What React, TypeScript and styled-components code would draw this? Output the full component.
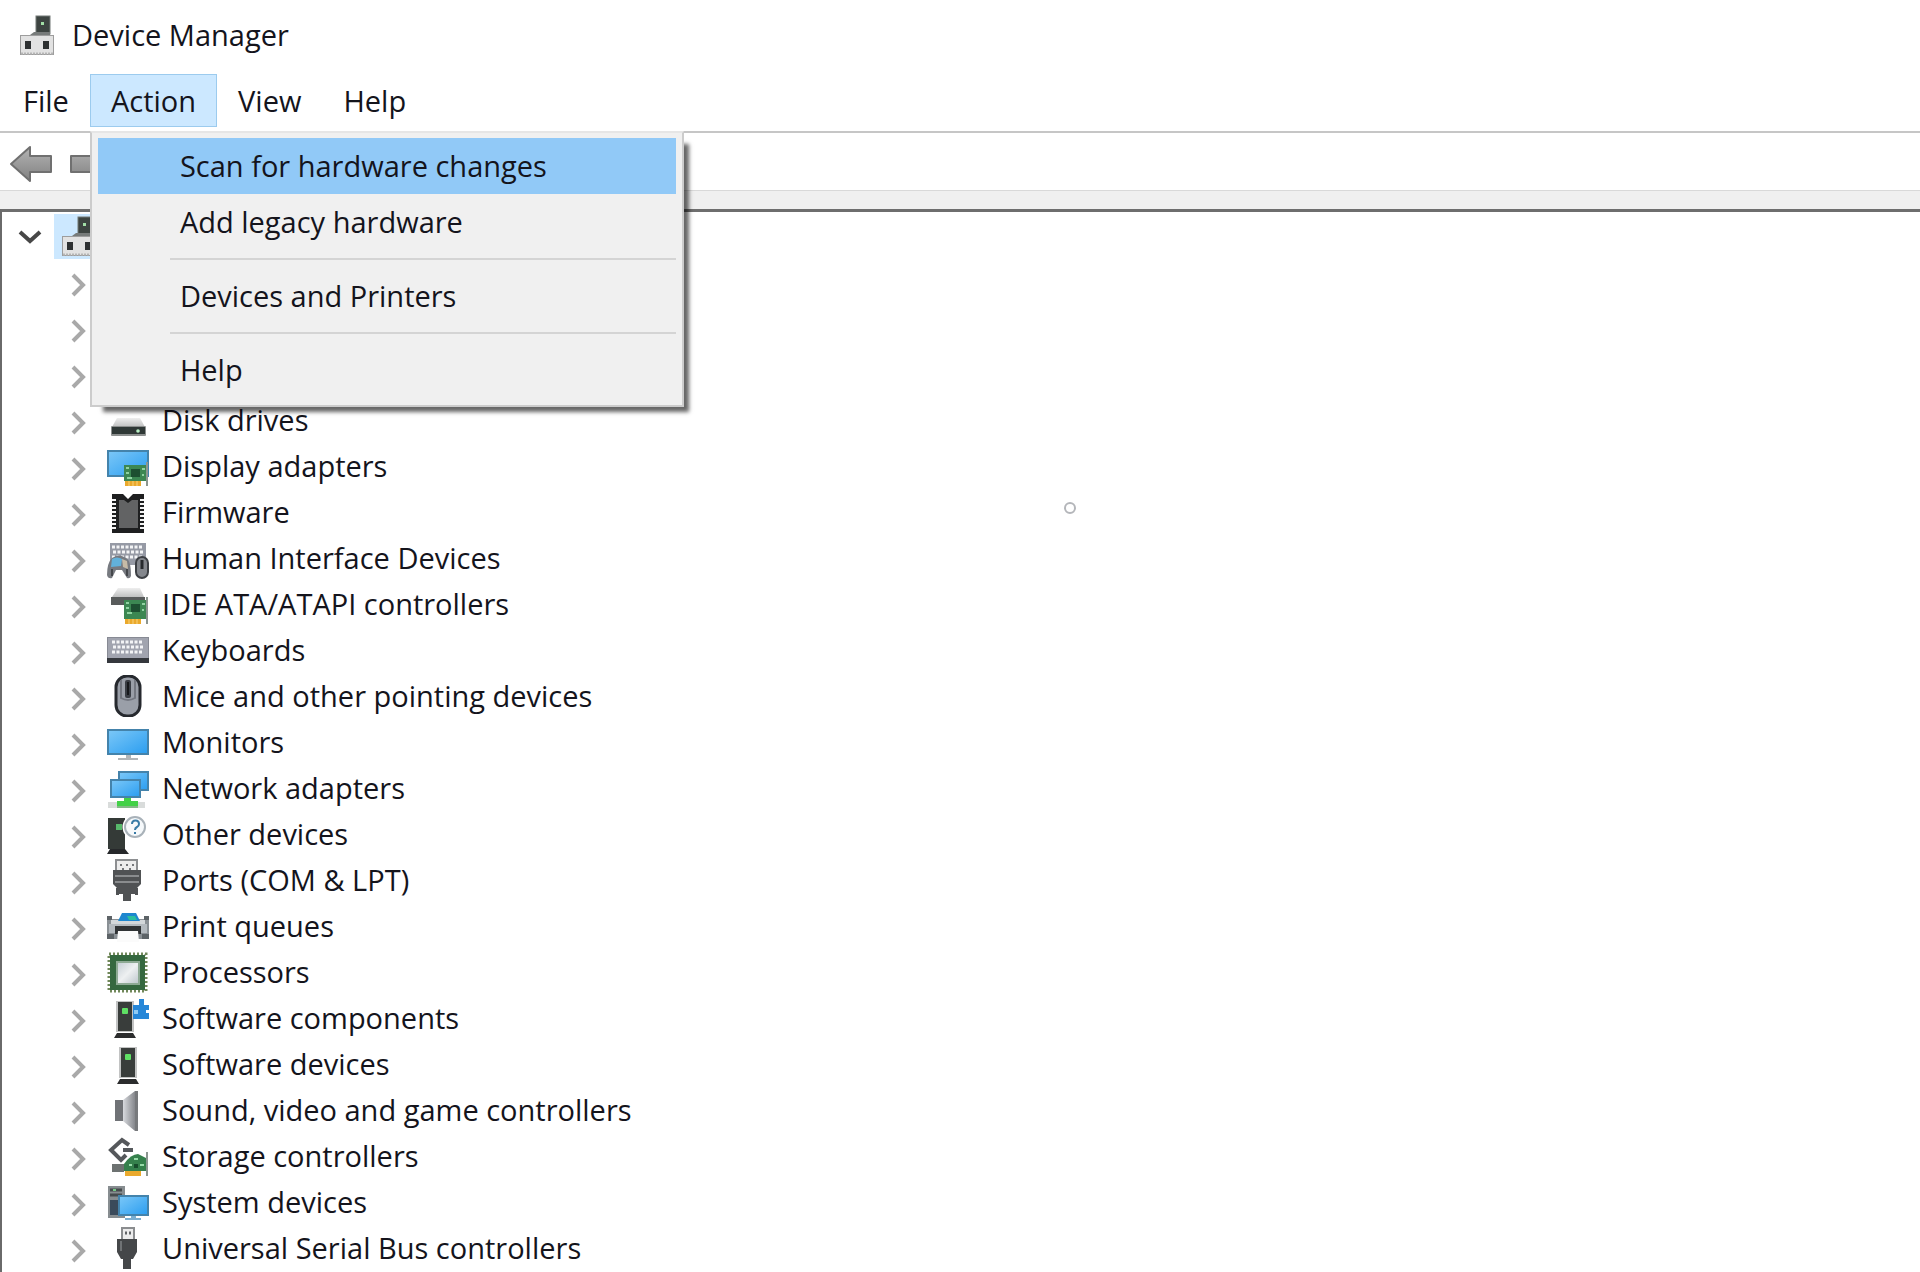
import React from "react";
import styled, { createGlobalStyle } from "styled-components";

const GlobalStyle = createGlobalStyle`
  *, *::before, *::after { box-sizing: border-box; }
  body {
    margin: 0;
    background: #ffffff;
    color: #14141c;
    font-family: "Open Sans", "Noto Sans", sans-serif;
    font-size: 29px;
    line-height: 36px;
  }
  button { font: inherit; color: inherit; }
`;

const Window = styled.div`
  position: relative;
  display: flex;
  flex-direction: column;
  min-height: 100vh;
  overflow: hidden;
`;

const TitleBar = styled.header`
  display: flex;
  align-items: center;
  gap: 14px;
  height: 70px;
  padding: 0 16px;
`;

const Title = styled.h1`
  margin: 0;
  font: inherit;
`;

const MenuBar = styled.nav`
  display: flex;
  padding: 4px 2px;
  border-bottom: 2px solid #c6c6c6;
`;

const MenuSlot = styled.div`
  position: relative;
`;

const MenuButton = styled.button<{ $open?: boolean }>`
  height: 53px;
  padding: 0 20px;
  border: 1px solid ${(p) => (p.$open ? "#9ccbee" : "transparent")};
  background: ${(p) => (p.$open ? "#cce8ff" : "transparent")};
  white-space: nowrap;
`;

const Menu = styled.div`
  position: absolute;
  z-index: 2;
  top: 57px;
  left: 0;
  width: 594px;
  padding: 5px 6px 7px;
  border: 2px solid #cccccc;
  border-top-color: #e6e6e6;
  background: #f0f0f0;
  box-shadow: 9px 9px 4px -4px rgba(0, 0, 0, 0.6);
`;

const MenuItem = styled.button<{ $active?: boolean }>`
  display: block;
  width: 100%;
  height: 56px;
  padding: 0 0 0 82px;
  border: 0;
  background: ${(p) => (p.$active ? "#91c9f7" : "transparent")};
  text-align: left;
`;

const Separator = styled.hr`
  height: 2px;
  margin: 8px 0 8px 72px;
  border: 0;
  background: #d4d4d4;
`;

const ToolBar = styled.div`
  display: flex;
  align-items: center;
  gap: 16px;
  height: 57px;
  padding: 4px 9px 0;
`;

const ToolButton = styled.button`
  display: flex;
  padding: 0;
  border: 0;
  background: transparent;
`;

const Band = styled.div`
  height: 19px;
  border-top: 1px solid #d9d9d9;
  background: #f0f0f0;
`;

const TreePane = styled.main`
  flex: 1;
  border-top: 3px solid #6e6e6e;
  border-left: 2px solid #6a6a6a;
`;

const List = styled.ul`
  margin: 0;
  padding: 1px 0 0;
  list-style: none;
`;

const Row = styled.li<{ $root?: boolean }>`
  display: flex;
  align-items: center;
  height: 46px;
  padding-left: ${(p) => (p.$root ? 15 : 65)}px;
`;

const Expander = styled.button<{ $root?: boolean }>`
  display: flex;
  justify-content: center;
  width: ${(p) => (p.$root ? 25 : 24)}px;
  margin-right: ${(p) => (p.$root ? 12 : 16)}px;
  padding: ${(p) => (p.$root ? 2 : 6)}px 0 0;
  border: 0;
  background: transparent;
`;

const Selection = styled.div`
  width: 120px;
  height: 45px;
  padding: 1px 4px;
  background: #cce8ff;
`;

const Label = styled.span`
  margin-left: 13px;
  white-space: nowrap;
`;

const BusyDot = styled.span`
  position: absolute;
  top: 502px;
  left: 1064px;
  width: 12px;
  height: 12px;
  border: 2px solid #b4b6ba;
  border-radius: 50%;
`;

const IconBox = styled.svg`
  display: block;
  flex: none;
  width: 42px;
  height: 42px;
`;

const HiddenSvg = styled.svg`
  display: block;
  width: 0;
  height: 0;
`;

const Svg = ({ children }: { children: React.ReactNode }) => (
  <IconBox viewBox="0 0 42 42" aria-hidden="true">
    {children}
  </IconBox>
);

const Defs = () => (
  <HiddenSvg aria-hidden="true">
    <defs>
      <linearGradient id="screen" x1="0" y1="0" x2="1" y2="1">
        <stop offset="0" stopColor="#7cc8f8" />
        <stop offset="1" stopColor="#2a9df0" />
      </linearGradient>
      <linearGradient id="steel" x1="0" y1="0" x2="1" y2="0">
        <stop offset="0" stopColor="#d8dade" />
        <stop offset="1" stopColor="#85878c" />
      </linearGradient>
      <linearGradient id="arrow" x1="0" y1="0" x2="0" y2="1">
        <stop offset="0" stopColor="#b4b4b4" />
        <stop offset="1" stopColor="#818181" />
      </linearGradient>
      <linearGradient id="lid" x1="0" y1="0" x2="0" y2="1">
        <stop offset="0" stopColor="#eeeeee" />
        <stop offset="1" stopColor="#bfc0c0" />
      </linearGradient>
      <linearGradient id="die" x1="0" y1="0" x2="1" y2="1">
        <stop offset="0" stopColor="#c3ccd3" />
        <stop offset="0.5" stopColor="#eef0f1" />
        <stop offset="1" stopColor="#bcc5cb" />
      </linearGradient>
    </defs>
  </HiddenSvg>
);

const Card = ({ top = 20 }: { top?: number }) => (
  <g>
    <rect x="18" y="35" width="16" height="6" fill="#eaa92c" />
    <path d="M22 36v5M26 36v5M30 36v5" stroke="#f8d27a" />
    <rect x="17" y={top} width="22" height={36 - top} fill="#3c8752" />
    <rect x="24" y={top + 4} width="9" height="8" fill="#1d4f31" />
    <path d={`M19 ${top + 3}h3M35 ${top + 4}h3M19 ${top + 8}h3M35 ${top + 10}h2M20 ${top + 13}h5`} stroke="#8fd3a1" strokeWidth="2" />
    <path d={`M40 ${top - 3}V41`} stroke="#8b9590" strokeWidth="2" />
  </g>
);

const Screen = ({ x, y, w, h }: { x: number; y: number; w: number; h: number }) => (
  <rect x={x + 1} y={y + 1} width={w - 2} height={h - 2} fill="url(#screen)" stroke="#4483ab" strokeWidth="2" />
);

const Tower = ({ x }: { x: number }) => (
  <g>
    <rect x={x} y="4" width="18" height="31" fill="#c2c3c3" />
    <rect x={x + 2} y="5" width="14" height="29" fill="#393d3b" />
    <rect x={x + 6} y="11" width="6" height="6" rx="1" fill="#5fe064" />
    <path d={`M${x + 1} 36h16l3 5H${x - 2}z`} fill="#2b2c2d" />
  </g>
);

const Keys = ({ x, y, rows }: { x: number; y: number; rows: number }) => (
  <g stroke="#f3f4f6" strokeWidth="3">
    {Array.from({ length: rows }, (_, i) => (
      <path key={i} d={`M${x + (i % 2)} ${y + i * 5}h31`} strokeDasharray="3 1.5" />
    ))}
  </g>
);

const ComputerIcon = () => (
  <Svg>
    <rect x="20" y="2" width="14" height="18" fill="#3d4441" stroke="#737876" />
    <rect x="25" y="8" width="3" height="3" fill="#a2dfa6" />
    <path d="M18 18h16v3H14z" fill="#777b7a" />
    <rect x="4.5" y="21.5" width="33" height="19" fill="#e2e2e2" stroke="#9d9d9d" />
    <path d="M5 39.5h32" stroke="#b5b5b5" strokeWidth="2" strokeDasharray="2 1" />
    <rect x="9" y="27" width="6" height="8" fill="#2d3031" />
    <rect x="27" y="27" width="6" height="8" fill="#2d3031" />
  </Svg>
);

const icons: Record<string, React.ReactNode> = {
  disk: (
    <>
      <path d="M10 19h23l5 9H5z" fill="url(#lid)" />
      <rect x="4" y="27" width="35" height="10" rx="1" fill="#8d908f" />
      <rect x="5" y="28" width="33" height="7" fill="#2f3836" />
      <circle cx="31" cy="32" r="1.8" fill="#b9f0c4" />
    </>
  ),
  display: (
    <>
      <Screen x={0} y={5} w={42} h={27} />
      <Card top={20} />
    </>
  ),
  firmware: (
    <>
      <path d="M5 3h11l5 5 5-5h11v39H5z" fill="#1e1f20" />
      <path d="M12 9h5l4 3 4-3h6v28H12z" fill="#626364" />
      <path d="M7 8v31M35 8v31" stroke="#f4f4f4" strokeWidth="4" strokeDasharray="2 2" />
    </>
  ),
  hid: (
    <>
      <rect x="3" y="6" width="36" height="22" fill="#969aa5" />
      <Keys x={5} y={10} rows={3} />
      <path d="M5 21q7-5 14 0 5 2 5 18-1 3-4 2l-5-8H9l-4 8q-4 1-5-3 0-12 5-17z" fill="#777a80" />
      <path d="M5 22q5-3 10 0l-1 7-10 1z" fill="#62b1da" />
      <path d="M15 22l5 2 1 8-5-2z" fill="#c6bba7" />
      <path d="M5 32v7M20 32v7" stroke="#44474b" strokeWidth="2" />
      <rect x="29" y="20" width="12" height="21" rx="6" fill="#84878d" stroke="#3d4045" strokeWidth="2" />
      <path d="M35 23v9" stroke="#26292d" strokeWidth="3" />
    </>
  ),
  ide: (
    <>
      <path d="M11 5h22l4 9H5z" fill="url(#lid)" />
      <rect x="4" y="14" width="34" height="8" fill="#585b5b" />
      <Card top={17} />
    </>
  ),
  keyboard: (
    <>
      <rect x="0.5" y="8.5" width="41" height="25" fill="#a1a4af" stroke="#878a94" />
      <Keys x={5} y={13} rows={3} />
      <rect x="0" y="29" width="42" height="5" fill="#35383d" />
    </>
  ),
  mouse: (
    <>
      <rect x="9" y="1" width="24" height="40" rx="11" fill="#9a9fa8" stroke="#26292e" strokeWidth="3" />
      <path d="M14 5v18q7 4 14 0V5" fill="none" stroke="#737780" strokeWidth="2" />
      <rect x="18" y="5" width="6" height="18" rx="2" fill="#3a3e45" />
      <path d="M21 7v13" stroke="#16181b" strokeWidth="2" />
    </>
  ),
  monitor: (
    <>
      <Screen x={0} y={8} w={42} h={26} />
      <path d="M19 34h5v3h7v2H11v-2h8z" fill="#b2b6b9" />
    </>
  ),
  network: (
    <>
      <Screen x={11} y={4} w={31} h={20} />
      <rect x="1" y="35" width="37" height="6" fill="#d9dcdb" />
      <path d="M17 30h7v4h7v7H10v-7h7z" fill="#43d147" />
      <path d="M10 40h21" stroke="#85b987" strokeWidth="2" />
      <Screen x={3} y={12} w={31} h={19} />
    </>
  ),
  other: (
    <>
      <rect x="1" y="5" width="17" height="31" fill="#343a37" />
      <rect x="9" y="11" width="6" height="6" fill="#57b96b" />
      <path d="M3 36h15l4 5H0z" fill="#26282a" />
      <circle cx="28" cy="14" r="12.5" fill="#ffffff" />
      <circle cx="28" cy="14" r="10" fill="#f6f9fb" stroke="#a9b2b9" strokeWidth="2" />
      <path d="M25 11q0-3.5 3.5-3.500T32 11q0 2-2 3t-2 3" fill="none" stroke="#397ba6" strokeWidth="2" />
      <rect x="27" y="19" width="2" height="2" fill="#397ba6" />
    </>
  ),
  port: (
    <>
      <rect x="9" y="1" width="21" height="12" fill="#ededed" stroke="#8d8f91" strokeWidth="2" />
      <path d="M13 6h2M19 6h2M25 6h2M15 10h2M22 10h2" stroke="#75777a" strokeWidth="2" />
      <path d="M6 11h28v14l-4 4h-2v6h-4v7h-8v-7h-4v-6h-2l-4-4z" fill="#505254" />
      <path d="M8 17h24M8 23h24" stroke="#8a8c8e" strokeWidth="2" />
      <rect x="9" y="29" width="3" height="7" fill="#505254" />
      <rect x="28" y="29" width="3" height="7" fill="#505254" />
    </>
  ),
  printer: (
    <>
      <path d="M0 11h5v3h32v-3h5v22h-5v1H5v-1H0z" fill="#8a9095" />
      <path d="M4 15h34v4H4z" fill="#d3d7da" />
      <path d="M2 19h38v9H2z" fill="#b4babf" />
      <path d="M15 8h14l4 8H11z" fill="#1d87cf" />
      <path d="M20 11h8l2 4h-8z" fill="#2bbfa0" />
      <path d="M0 11h5v4H0zM37 11h5v4h-5zM0 29h7v5H0zM35 29h7v5h-7z" fill="#5d6367" />
      <path d="M8 21h26v8H8z" fill="#303335" />
      <path d="M11 26h20l1 11H10z" fill="#fbfbfb" />
    </>
  ),
  cpu: (
    <>
      <rect x="2" y="3" width="37" height="37" fill="none" stroke="#71885a" strokeWidth="3" strokeDasharray="2 2" />
      <rect x="3" y="4" width="35" height="35" fill="#35683f" />
      <rect x="10" y="11" width="22" height="22" fill="url(#die)" stroke="#8eaa94" strokeWidth="2" />
    </>
  ),
  component: (
    <>
      <Tower x={9} />
      <path d="M26 8h6V2h5v6h5v5h-3v3h3v6H26z" fill="#2787d8" />
      <path d="M27 13h4v4h-4z" fill="#8fcbf5" />
    </>
  ),
  software: <Tower x={12} />,
  sound: (
    <>
      <rect x="8" y="11" width="9" height="21" fill="#707276" />
      <path d="M16 11L28 2v40L16 32z" fill="url(#steel)" />
      <path d="M28 2h3v40h-3z" fill="#77797c" />
    </>
  ),
  storage: (
    <>
      <path d="M5 29h12v8H5z" fill="#6d7271" />
      <path d="M22 10L15 5 4 15l10 10 5-5M16 15h10" fill="none" stroke="#55585b" strokeWidth="4" />
      <path d="M17 29q7-10 14-10l8 4v13H17z" fill="#35804c" />
      <path d="M27 24h4M22 30h3M33 30h4" stroke="#98dba9" strokeWidth="2" />
      <path d="M27 29h4v4h-4z" fill="#174c2c" />
      <rect x="18" y="36" width="16" height="5" fill="#eaa92c" />
      <path d="M40 17v24" stroke="#8b9590" strokeWidth="2" />
    </>
  ),
  system: (
    <>
      <rect x="1" y="5" width="17" height="32" fill="#878d90" />
      <path d="M3 9h12M3 14h12" stroke="#464b4d" strokeWidth="3" />
      <rect x="3" y="19" width="8" height="15" fill="#3a4a5a" />
      <rect x="6" y="8" width="3" height="2" fill="#73c883" />
      <Screen x={11} y={14} w={31} h={21} />
      <path d="M24 35h5v2h5v2H18v-2h6z" fill="#7baed0" />
    </>
  ),
  usb: (
    <>
      <rect x="15" y="1" width="12" height="13" fill="#ececec" stroke="#8b8d8f" strokeWidth="2" />
      <path d="M18 6h2M22 6h2" stroke="#606366" strokeWidth="3" />
      <path d="M10 12h20v13l-4 7h-2v10h-8V32h-2l-4-7z" fill="#454749" />
      <path d="M14 14v10" stroke="#707375" strokeWidth="2" />
    </>
  ),
};

const Chevron = () => (
  <svg width="16" height="24" viewBox="0 0 16 24" fill="none" aria-hidden="true">
    <path d="M2 2l10 10L2 22" stroke="#a9a9a9" strokeWidth="4" />
  </svg>
);

const ChevronDown = () => (
  <svg width="24" height="16" viewBox="0 0 24 16" fill="none" aria-hidden="true">
    <path d="M2 3l10 9 10-9" stroke="#474747" strokeWidth="4" />
  </svg>
);

const Arrow = ({ flip }: { flip?: boolean }) => (
  <svg width="44" height="38" viewBox="0 0 44 38" aria-hidden="true">
    <path
      d={flip ? "M42 19L23 2v9H2v16h21v9z" : "M2 19L21 2v9h21v16H21v9z"}
      fill="url(#arrow)"
      stroke="#707070"
      strokeWidth="2"
      strokeLinejoin="round"
    />
  </svg>
);

const devices: { icon?: string; name?: string }[] = [
  {},
  {},
  {},
  { icon: "disk", name: "Disk drives" },
  { icon: "display", name: "Display adapters" },
  { icon: "firmware", name: "Firmware" },
  { icon: "hid", name: "Human Interface Devices" },
  { icon: "ide", name: "IDE ATA/ATAPI controllers" },
  { icon: "keyboard", name: "Keyboards" },
  { icon: "mouse", name: "Mice and other pointing devices" },
  { icon: "monitor", name: "Monitors" },
  { icon: "network", name: "Network adapters" },
  { icon: "other", name: "Other devices" },
  { icon: "port", name: "Ports (COM & LPT)" },
  { icon: "printer", name: "Print queues" },
  { icon: "cpu", name: "Processors" },
  { icon: "component", name: "Software components" },
  { icon: "software", name: "Software devices" },
  { icon: "sound", name: "Sound, video and game controllers" },
  { icon: "storage", name: "Storage controllers" },
  { icon: "system", name: "System devices" },
  { icon: "usb", name: "Universal Serial Bus controllers" },
];

export default function App() {
  return (
    <Window>
      <GlobalStyle />
      <Defs />
      <TitleBar>
        <ComputerIcon />
        <Title>Device Manager</Title>
      </TitleBar>
      <MenuBar>
        <MenuButton>File</MenuButton>
        <MenuSlot>
          <MenuButton $open>Action</MenuButton>
          <Menu>
            <MenuItem $active>Scan for hardware changes</MenuItem>
            <MenuItem>Add legacy hardware</MenuItem>
            <Separator />
            <MenuItem>Devices and Printers</MenuItem>
            <Separator />
            <MenuItem>Help</MenuItem>
          </Menu>
        </MenuSlot>
        <MenuButton>View</MenuButton>
        <MenuButton>Help</MenuButton>
      </MenuBar>
      <ToolBar>
        <ToolButton>
          <Arrow />
        </ToolButton>
        <ToolButton>
          <Arrow flip />
        </ToolButton>
      </ToolBar>
      <Band />
      <TreePane>
        <List>
          <Row $root>
            <Expander $root>
              <ChevronDown />
            </Expander>
            <Selection>
              <ComputerIcon />
            </Selection>
          </Row>
          {devices.map((device, i) => (
            <Row key={i}>
              <Expander>
                <Chevron />
              </Expander>
              {device.icon && <Svg>{icons[device.icon]}</Svg>}
              {device.name && <Label>{device.name}</Label>}
            </Row>
          ))}
        </List>
      </TreePane>
      <BusyDot />
    </Window>
  );
}
